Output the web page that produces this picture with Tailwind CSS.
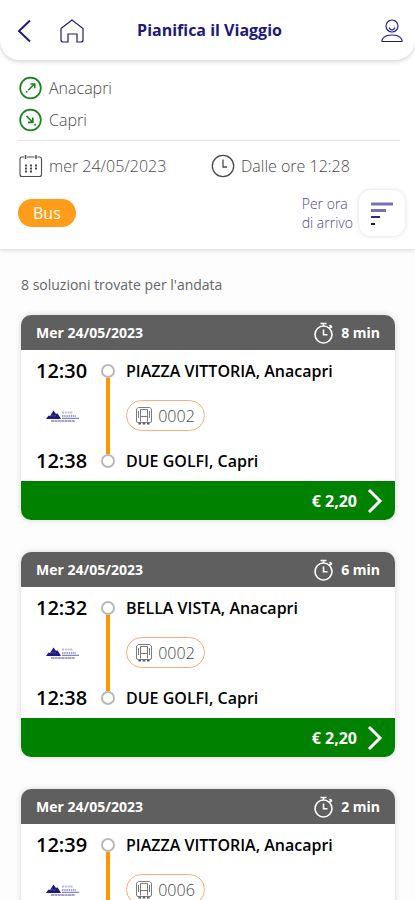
<!DOCTYPE html>
<html lang="it">
<head>
<meta charset="utf-8">
<meta name="viewport" content="width=device-width, initial-scale=1">
<title>Pianifica il Viaggio</title>
<script src="https://cdn.jsdelivr.net/npm/@tailwindcss/browser@4"></script>
</head>
<body class="flex h-screen flex-col overflow-hidden bg-[#fdfdfd] font-['Open_Sans',sans-serif] text-[#4a4a4a]">

<svg class="hidden" aria-hidden="true">
  <symbol id="stopwatch" viewBox="0 0 22 22" fill="none" stroke="currentColor" stroke-width="1.6">
    <circle cx="10.5" cy="12.5" r="8.5"/>
    <path d="M7.500 1.500h6M10.500 1.500V4M16.500 3l2.500 2.500M18.500 3.500l-2 2.800M10.500 7.500v5.300h4"/>
  </symbol>
  <symbol id="bus" viewBox="0 0 16 18" fill="none" stroke="#5a5a5a">
    <path d="M2.500.5h11l2 1.500v12q0 1.500-1.500 1.500H2Q.5 15.500.5 14V2z" stroke-width=".8"/>
    <path d="M4.500 14.500V2.500h7v12M4.500 9.500h7M2.500 4v7M13.500 4v7" stroke-width=".8"/>
    <path d="M2.500 16.800h2.500M6.700 16.800h2.600M11 16.800h2.500" stroke-width="1.500"/>
  </symbol>
  <symbol id="operator" viewBox="0 0 34 12">
    <path d="M0 9 2.500 5.500 4 6 7.500.5 10 4l1.500-.8L15 9z" fill="#1c1a80"/>
    <path d="M4.500 6.500 6.500 5l1.500 1.500 2-1.500" fill="none" stroke="#6c6bb5" stroke-width=".6"/>
    <path d="M16 2.500h11" stroke="#b9b9dc" stroke-width="2" stroke-dasharray="2 .8"/>
    <path d="M16 6h14" stroke="#a3a3d0" stroke-width="2" stroke-dasharray="1.500 .7"/>
    <path d="M16 8.300h17" stroke="#6665ae" stroke-width="1"/>
    <path d="M5 11h24" stroke="#8584c2" stroke-width="1.400" stroke-dasharray="3 .4"/>
  </symbol>
  <symbol id="chevron" viewBox="0 0 16 26" fill="none" stroke="currentColor" stroke-width="3">
    <path d="M2 2 13 13 2 24"/>
  </symbol>
</svg>

<header class="relative z-10 grid h-[60px] shrink-0 grid-cols-[1fr_auto_1fr] items-center rounded-b-[20px] bg-white pr-3 pl-4 text-[#20197c] shadow-[0_2px_4px_rgba(0,0,0,0.16)]">
  <div class="flex items-center gap-7 pt-0.5">
    <button type="button" aria-label="Indietro">
      <svg class="h-6 w-4" viewBox="0 0 16 24" fill="none" stroke="currentColor" stroke-width="2"><path d="M14 1.500 3 12l11 10.500"/></svg>
    </button>
    <a href="#" aria-label="Home">
      <svg class="size-6" viewBox="0 0 24 24" fill="none" stroke="currentColor" stroke-width="1.200"><path d="M1 9.500 12 1l11 8.500V21q0 2-2 2h-4v-8H8v8H3q-2 0-2-2z"/></svg>
    </a>
  </div>
  <h1 class="text-[16px] leading-5 font-bold">Pianifica il Viaggio</h1>
  <a href="#" aria-label="Profilo" class="justify-self-end pt-0.5">
    <svg class="h-6 w-[22px]" viewBox="0 0 22 24" fill="none" stroke="currentColor" stroke-width="1.100"><circle cx="11" cy="7" r="6"/><path d="M8 8.500q1 2.500 3 2.500t3-2.500M1 22.500v-1.500q2-5 10-5t10 5v1.500z"/></svg>
  </a>
</header>

<section class="-mt-5 shrink-0 bg-white pr-[15px] pl-[18px] pt-8 pb-[13px] shadow-[0_2px_4px_rgba(0,0,0,0.12)]">
  <div class="border-b border-[#e2e2e2] pb-1">
    <div class="flex h-8 items-center gap-1.5">
      <svg class="ml-px size-6 text-[#16821b]" viewBox="0 0 24 24" fill="none" stroke="currentColor"><circle cx="11.500" cy="12" r="10.300" stroke-width="1.700"/><path d="M7 16.500l1.300-1.300M9.300 14.200 16 7.500M11.500 8h4.300v4.300" stroke-width="1.500"/></svg>
      <span class="text-[16px] leading-6 font-light">Anacapri</span>
    </div>
    <div class="flex h-8 items-center gap-1.5">
      <svg class="ml-px size-6 text-[#16821b]" viewBox="0 0 24 24" fill="none" stroke="currentColor"><circle cx="11.500" cy="12" r="10.300" stroke-width="1.700"/><path d="M7.500 8l6 6M13.800 9.500v4.800H9M15.500 16.200l1.200 1.200" stroke-width="1.700"/></svg>
      <span class="text-[16px] leading-6 font-light">Capri</span>
    </div>
  </div>
  <div class="grid h-[49px] grid-cols-2 items-center">
    <button type="button" class="flex items-center gap-1.5">
      <svg class="ml-px size-6" viewBox="0 0 24 24" fill="none" stroke="currentColor"><path d="M5 3H3Q1 3 1 5v15.500q0 2 2 2h17.500q2 0 2-2V5q0-2-2-2h-2M8 3h7.500" stroke-width="1.100"/><path d="M6.500 1v4M17 1v4" stroke-width="1.500"/><path d="M6 11.500h2M11 11.500h2M16 11.500h2M6 14.500h2M11 14.500h2M16 14.500h2M6 17.500h2M11 17.500h2" stroke-width="1.800"/></svg>
      <span class="text-[16px] leading-6 font-light">mer 24/05/2023</span>
    </button>
    <button type="button" class="flex items-center gap-1.5">
      <svg class="ml-0.5 size-6" viewBox="0 0 24 24" fill="none" stroke="currentColor" stroke-width="1.300"><circle cx="12" cy="12" r="10.700"/><path d="M12 5.500v7.500h4"/></svg>
      <span class="text-[16px] leading-6 font-light">Dalle ore 12:28</span>
    </button>
  </div>
  <div class="-mr-[5px] flex h-[46px] items-center justify-between">
    <button type="button" class="h-7 rounded-full bg-[#ff9c19] px-[15px] text-[16px] leading-7 text-white">Bus</button>
    <div class="flex items-center gap-1.5 text-[#4a4596]">
      <label class="text-[14px] leading-[19px] font-light" for="sort">Per ora<br>di arrivo</label>
      <button id="sort" type="button" class="flex size-[46px] items-center justify-center rounded-xl bg-white shadow-[0_0_5px_rgba(0,0,0,0.14)]">
        <svg class="h-6 w-[22px]" viewBox="0 0 22 24" fill="none" stroke-width="2"><path d="M0 3h22" stroke="#7672b4" stroke-width="3"/><path d="M0 9.500h15" stroke="#7672b4" stroke-width="3"/><path d="M0 16h9" stroke="#2c2587"/><path d="M0 23h4" stroke="#17107b"/></svg>
      </button>
    </div>
  </div>
</section>

<main class="min-h-0 grow overflow-y-auto px-5 pt-[26px] [scrollbar-width:none]">
  <p class="mb-5 px-px text-[14px] leading-5 text-[#666]">8 soluzioni trovate per l'andata</p>
  <div class="flex flex-col gap-8 pb-8 pl-px">

    <article class="overflow-hidden rounded-[10px] bg-white shadow-[0_0_6px_rgba(0,0,0,0.16)]">
      <div class="flex h-[35px] items-center justify-between bg-[#5f5f5f] px-[15px] text-[14px] font-bold text-white">
        <h2>Mer 24/05/2023</h2>
        <span class="flex items-center gap-1.5"><svg class="size-[22px]"><use href="#stopwatch"/></svg>8 min</span>
      </div>
      <div class="grid grid-cols-[52px_14px_1fr] grid-rows-[41px_49px_41px] items-center gap-x-[13px] px-[15px] text-black">
        <time class="text-[20px] leading-6 font-semibold">12:30</time>
        <div class="row-span-3 flex h-[104px] flex-col items-center">
          <span class="size-3.5 rounded-full border-2 border-[#b9b9b9] bg-white"></span>
          <span class="w-1 grow bg-[#ff9500]"></span>
          <span class="size-3.5 rounded-full border-2 border-[#b9b9b9] bg-white"></span>
        </div>
        <h3 class="-ml-0.5 text-[16px] leading-5 font-semibold">PIAZZA VITTORIA, Anacapri</h3>
        <svg class="ml-2.5 h-3 w-[34px]"><use href="#operator"/></svg>
        <span class="-ml-0.5 flex h-[31px] w-[79px] items-center justify-center gap-1.5 rounded-full border border-[#ffab78] text-[16px] font-light text-[#444]"><svg class="h-[18px] w-4"><use href="#bus"/></svg>0002</span>
        <time class="text-[20px] leading-6 font-semibold">12:38</time>
        <h3 class="-ml-0.5 text-[16px] leading-5 font-semibold">DUE GOLFI, Capri</h3>
      </div>
      <button type="button" class="flex h-[39px] w-full items-center justify-end gap-2.5 bg-[#008200] pr-3 text-[16px] font-bold text-white">€ 2,20<svg class="h-[26px] w-4"><use href="#chevron"/></svg></button>
    </article>

    <article class="overflow-hidden rounded-[10px] bg-white shadow-[0_0_6px_rgba(0,0,0,0.16)]">
      <div class="flex h-[35px] items-center justify-between bg-[#5f5f5f] px-[15px] text-[14px] font-bold text-white">
        <h2>Mer 24/05/2023</h2>
        <span class="flex items-center gap-1.5"><svg class="size-[22px]"><use href="#stopwatch"/></svg>6 min</span>
      </div>
      <div class="grid grid-cols-[52px_14px_1fr] grid-rows-[41px_49px_41px] items-center gap-x-[13px] px-[15px] text-black">
        <time class="text-[20px] leading-6 font-semibold">12:32</time>
        <div class="row-span-3 flex h-[104px] flex-col items-center">
          <span class="size-3.5 rounded-full border-2 border-[#b9b9b9] bg-white"></span>
          <span class="w-1 grow bg-[#ff9500]"></span>
          <span class="size-3.5 rounded-full border-2 border-[#b9b9b9] bg-white"></span>
        </div>
        <h3 class="-ml-0.5 text-[16px] leading-5 font-semibold">BELLA VISTA, Anacapri</h3>
        <svg class="ml-2.5 h-3 w-[34px]"><use href="#operator"/></svg>
        <span class="-ml-0.5 flex h-[31px] w-[79px] items-center justify-center gap-1.5 rounded-full border border-[#ffab78] text-[16px] font-light text-[#444]"><svg class="h-[18px] w-4"><use href="#bus"/></svg>0002</span>
        <time class="text-[20px] leading-6 font-semibold">12:38</time>
        <h3 class="-ml-0.5 text-[16px] leading-5 font-semibold">DUE GOLFI, Capri</h3>
      </div>
      <button type="button" class="flex h-[39px] w-full items-center justify-end gap-2.5 bg-[#008200] pr-3 text-[16px] font-bold text-white">€ 2,20<svg class="h-[26px] w-4"><use href="#chevron"/></svg></button>
    </article>

    <article class="overflow-hidden rounded-[10px] bg-white shadow-[0_0_6px_rgba(0,0,0,0.16)]">
      <div class="flex h-[35px] items-center justify-between bg-[#5f5f5f] px-[15px] text-[14px] font-bold text-white">
        <h2>Mer 24/05/2023</h2>
        <span class="flex items-center gap-1.5"><svg class="size-[22px]"><use href="#stopwatch"/></svg>2 min</span>
      </div>
      <div class="grid grid-cols-[52px_14px_1fr] grid-rows-[41px_49px] items-center gap-x-[13px] px-[15px] text-black">
        <time class="text-[20px] leading-6 font-semibold">12:39</time>
        <div class="row-span-2 flex h-full flex-col items-center pt-3.5">
          <span class="size-3.5 shrink-0 rounded-full border-2 border-[#b9b9b9] bg-white"></span>
          <span class="w-1 grow bg-[#ff9500]"></span>
        </div>
        <h3 class="-ml-0.5 text-[16px] leading-5 font-semibold">PIAZZA VITTORIA, Anacapri</h3>
        <svg class="ml-2.5 h-3 w-[34px]"><use href="#operator"/></svg>
        <span class="-ml-0.5 flex h-[31px] w-[79px] items-center justify-center gap-1.5 rounded-full border border-[#ffab78] text-[16px] font-light text-[#444]"><svg class="h-[18px] w-4"><use href="#bus"/></svg>0006</span>
      </div>
    </article>

  </div>
</main>
</body>
</html>
